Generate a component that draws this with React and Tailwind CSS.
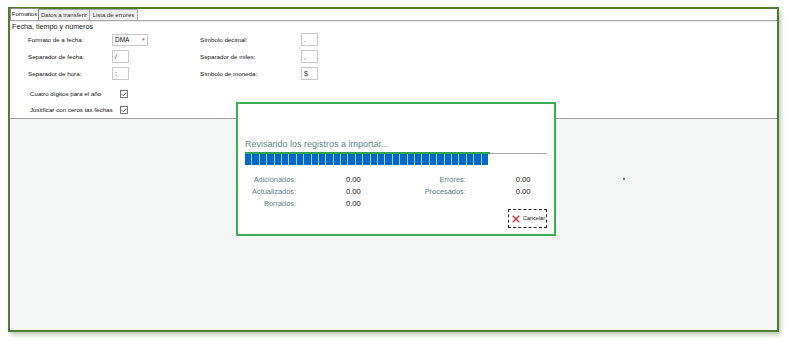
import { Check, X } from 'lucide-react'

const font = { fontFamily: '"Liberation Sans", Arial, sans-serif' }

function Field({ label, children }) {
  return (
    <div className="flex items-center h-[17px]">
      <span className="w-[84px] whitespace-nowrap text-[6.2px] text-[#111]">{label}</span>
      {children}
    </div>
  )
}

function SmallBox({ value }) {
  return (
    <div className="w-[17px] h-[13px] border border-[#c8c8c8] bg-white text-[7px] leading-[12px] pl-[2px] text-[#333]">
      {value}
    </div>
  )
}

function CheckRow({ label }) {
  return (
    <div className="flex items-center h-[16px]">
      <span className="w-[90px] whitespace-nowrap text-[6.2px] text-[#111]">{label}</span>
      <div className="w-[8px] h-[8px] border border-[#777] bg-white flex items-center justify-center">
        <Check size={7} strokeWidth={3} className="text-[#222]" />
      </div>
    </div>
  )
}

function Stat({ label, value, labelW }) {
  return (
    <div className="flex items-center h-[12px]">
      <span className={`${labelW} whitespace-nowrap text-right text-[7.4px] text-[#5b8080]`}>{label}</span>
      <span className="ml-[50px] text-[7.6px] text-[#111]">{value}</span>
    </div>
  )
}

export default function App() {
  return (
    <div style={font} className="w-[791px] h-[344px] bg-white pt-[7px] pl-[8px]">
      <div className="relative w-[771px] h-[325px] border-2 border-[#4f7d35] shadow-[2px_3px_4px_rgba(70,110,50,0.35)] flex flex-col bg-[#f5f7f6]">
        <div className="bg-white h-[109px] flex flex-col">
          <div className="flex items-end h-[12px] border-b border-[#a8a8a8]">
            <div className="h-[12px] w-[29px] border border-b-0 border-[#8a8a8a] bg-white text-[6px] leading-[11px] text-center whitespace-nowrap text-[#111]">Formatos</div>
            <div className="h-[11px] w-[51px] border border-b-0 border-l-0 border-[#a8a8a8] bg-[#f0f0f0] text-[6px] leading-[10px] text-center whitespace-nowrap text-[#333]">Datos a transferir</div>
            <div className="h-[11px] w-[48px] border border-b-0 border-l-0 border-[#a8a8a8] bg-[#f0f0f0] text-[6px] leading-[10px] text-center whitespace-nowrap text-[#333]">Lista de errores</div>
          </div>
          <div className="border-b border-[#ececec] h-[1px]" />
          <div className="pl-[2px] text-[7.2px] leading-[9px] text-[#222]">Fecha, tiempo y números</div>
          <div className="flex pl-[18px]">
            <div className="w-[172px] flex flex-col">
              <Field label="Formato de a fecha:">
                <div className="w-[36px] h-[12px] border border-[#c8c8c8] bg-white flex items-center justify-between px-[2px] text-[6.5px] text-[#111]">
                  <span>DMA</span>
                  <span className="text-[5px] text-[#777]">▾</span>
                </div>
              </Field>
              <Field label="Separador de fecha:">
                <SmallBox value="/" />
              </Field>
              <Field label="Separador de hora:">
                <SmallBox value=":" />
              </Field>
            </div>
            <div className="flex flex-col">
              <Field label="Símbolo decimal:">
                <div className="ml-[17px]"><SmallBox value="." /></div>
              </Field>
              <Field label="Separador de miles:">
                <div className="ml-[17px]"><SmallBox value="," /></div>
              </Field>
              <Field label="Símbolo de moneda:">
                <div className="ml-[17px]"><SmallBox value="$" /></div>
              </Field>
            </div>
          </div>
          <div className="pl-[20px] pt-[4px] flex flex-col">
            <CheckRow label="Cuatro dígitos para el año" />
            <CheckRow label="Justificar con ceros las fechas" />
          </div>
        </div>
        <div className="h-[1px] bg-[#a0a0a0]" />
        <div className="flex-1" />

        <div className="absolute left-[613px] top-[169px] w-[2px] h-[2px] bg-[#2fa44f]" />

        <div className="absolute left-[226px] top-[93px] w-[320px] h-[134px] border-2 border-[#3cae55] bg-white flex flex-col px-[7px]">
          <div className="mt-[34px] text-[9px] leading-[12px] text-[#5a8a86]">Revisando los registros a importar...</div>
          <div className="mt-[3px] h-[1px] bg-[#a8a8a8] relative">
            <div className="absolute left-0 top-[-1px] h-[2px] w-[245px] bg-[#2ea44f]" />
          </div>
          <div className="flex gap-[1px] h-[11px] w-fit bg-[#a9cbea]">
            {Array.from({ length: 33 }).map((_, i) => (
              <div key={i} className="w-[6.4px] h-full bg-[#0068c9]" />
            ))}
          </div>
          <div className="flex mt-[9px]">
            <div className="flex flex-col">
              <Stat label="Adicionados:" value="0.00" labelW="w-[51px]" />
              <Stat label="Actualizados:" value="0.00" labelW="w-[51px]" />
              <Stat label="Borrados:" value="0.00" labelW="w-[51px]" />
            </div>
            <div className="flex flex-col ml-[50px]">
              <Stat label="Errores:" value="0.00" labelW="w-[55px]" />
              <Stat label="Procesados:" value="0.00" labelW="w-[55px]" />
            </div>
          </div>
          <div className="flex justify-end mt-[-1px]">
            <div className="w-[39px] h-[19px] border border-dashed border-[#222] flex items-center gap-[1px] pl-[1px]">
              <X size={12} strokeWidth={2.2} className="text-[#e01b1b]" />
              <span className="text-[5.5px] text-[#111]">Cancelar</span>
            </div>
          </div>
        </div>
      </div>
    </div>
  )
}
